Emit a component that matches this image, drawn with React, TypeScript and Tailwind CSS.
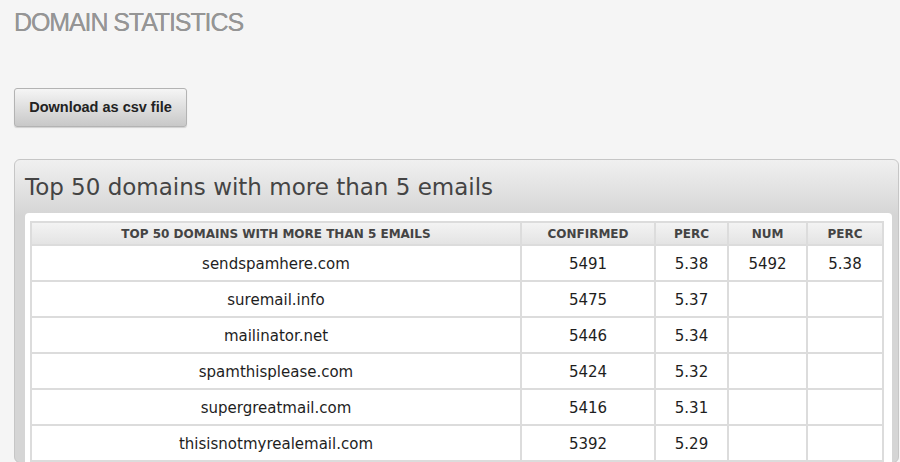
const rows = [
  { domain: 'sendspamhere.com', confirmed: '5491', perc: '5.38', num: '5492', perc2: '5.38' },
  { domain: 'suremail.info', confirmed: '5475', perc: '5.37', num: '', perc2: '' },
  { domain: 'mailinator.net', confirmed: '5446', perc: '5.34', num: '', perc2: '' },
  { domain: 'spamthisplease.com', confirmed: '5424', perc: '5.32', num: '', perc2: '' },
  { domain: 'supergreatmail.com', confirmed: '5416', perc: '5.31', num: '', perc2: '' },
  { domain: 'thisisnotmyrealemail.com', confirmed: '5392', perc: '5.29', num: '', perc2: '' },
];

const headers = ['TOP 50 DOMAINS WITH MORE THAN 5 EMAILS', 'CONFIRMED', 'PERC', 'NUM', 'PERC'];

export default function App() {
  return (
    <div className="h-[462px] w-[900px] overflow-hidden bg-[#f5f5f5] pl-[14px] pt-[10px]">
      {/* Page title */}
      <h1 className="font-['Liberation_Sans',Arial,sans-serif] text-[25px] leading-[25px] tracking-[-1.1px] text-[#959595] [text-shadow:0_0_0.4px_#959595]">
        DOMAIN STATISTICS
      </h1>

      <button className="mt-[53px] h-[39px] w-[173px] rounded-[3px] border border-[#b3b3b3] bg-[linear-gradient(to_bottom,#f5f5f5,#c8c8c8)] font-['Liberation_Sans',Arial,sans-serif] text-[14.5px] font-bold text-[#222] shadow-[0_1px_1px_rgba(0,0,0,0.15)]">
        Download as csv file
      </button>

      {/* Stats panel */}
      <div className="mt-[32px] w-[885px] rounded-[6px] border border-[#c6c6c6] bg-[linear-gradient(to_bottom,#f0f0f0,#d5d5d5_56px)] pl-[10px] pr-[6px] pt-[13px]">
        <h2 className="mb-[12px] font-['DejaVu_Sans',Verdana,sans-serif] text-[23px] leading-[28px] text-[#444]">
          Top 50 domains with more than 5 emails
        </h2>

        <div className="rounded-t-[4px] bg-white pl-[5px] pr-[6px] pt-[8px]">
          <table className="w-[854px] table-fixed border-collapse font-['DejaVu_Sans',Verdana,sans-serif]">
            <colgroup>
              <col className="w-[490px]" />
              <col className="w-[134px]" />
              <col className="w-[73px]" />
              <col className="w-[79px]" />
              <col className="w-[76px]" />
            </colgroup>
            <thead>
              <tr className="h-[23px] bg-[linear-gradient(to_bottom,#f4f4f4,#e3e3e3)]">
                {headers.map((h, i) => (
                  <th
                    key={i}
                    className="border-2 border-[#dcdcdc] p-0 text-center text-[12px] font-bold leading-[14px] text-[#444]"
                  >
                    {h}
                  </th>
                ))}
              </tr>
            </thead>
            <tbody>
              {rows.map((r) => (
                <tr key={r.domain} className="h-[36px]">
                  <td className="border-2 border-[#dcdcdc] p-0 pt-[3px] text-center text-[15px] text-[#1e1e1e]">{r.domain}</td>
                  <td className="border-2 border-[#dcdcdc] p-0 pt-[3px] text-center text-[15px] text-[#1e1e1e]">{r.confirmed}</td>
                  <td className="border-2 border-[#dcdcdc] p-0 pt-[3px] text-center text-[15px] text-[#1e1e1e]">{r.perc}</td>
                  <td className="border-2 border-[#dcdcdc] p-0 pt-[3px] text-center text-[15px] text-[#1e1e1e]">{r.num}</td>
                  <td className="border-2 border-[#dcdcdc] p-0 pt-[3px] text-center text-[15px] text-[#1e1e1e]">{r.perc2}</td>
                </tr>
              ))}
            </tbody>
          </table>
        </div>
      </div>
    </div>
  );
}
